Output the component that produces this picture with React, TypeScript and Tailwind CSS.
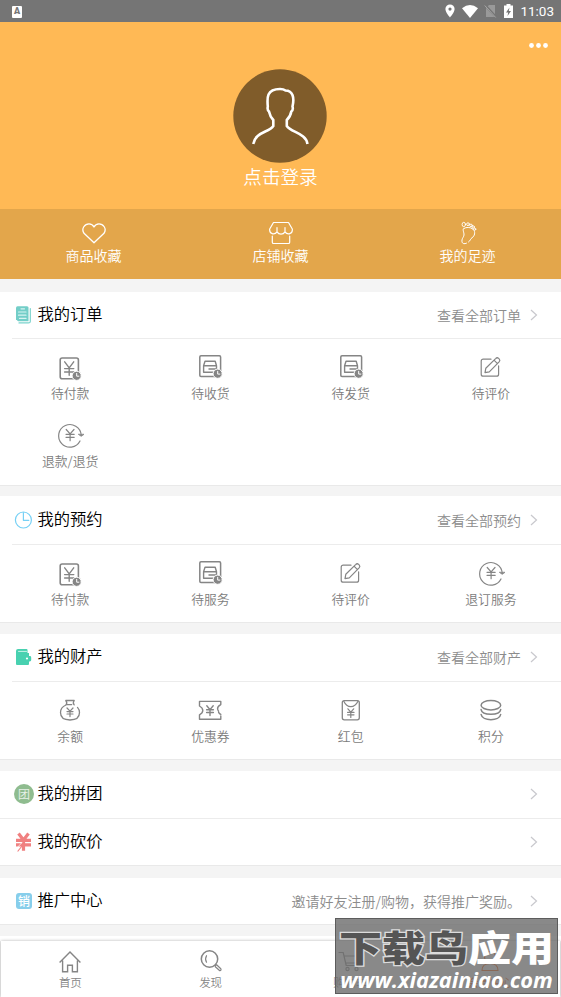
import type { ReactNode } from "react"

function Svg({ children, size = 28 }: { children: ReactNode; size?: number }) {
  return (
    <svg
      width={size}
      height={size}
      viewBox={`0 0 ${size} ${size}`}
      fill="none"
      stroke="currentColor"
      strokeWidth="1.2"
      strokeLinecap="round"
      strokeLinejoin="round"
      className="shrink-0"
    >
      {children}
    </svg>
  )
}

function ClockBadge({ x, y }: { x: number; y: number }) {
  return (
    <>
      <circle cx={x} cy={y} r="4.6" fill="currentColor" stroke="#fff" strokeWidth="1" />
      <path d={`M${x} ${y - 2.4}V${y + 0.4}H${x + 2.2}`} stroke="#fff" strokeWidth="1" />
    </>
  )
}

const PayIcon = () => (
  <Svg>
    <rect x="4.2" y="5" width="18.2" height="20.8" rx="2" strokeWidth="1.6" />
    <path d="M8.7 8.8l4.5 6 4.5-6M13.2 14.8v7.4M8.6 15.6h9.2M8.6 19h9.2" strokeWidth="1.4" />
    <ClockBadge x={20.7} y={22.8} />
  </Svg>
)

const BoxIcon = () => (
  <Svg>
    <rect x="3.8" y="2.8" width="20.8" height="20.6" rx="1.2" strokeWidth="1.5" />
    <path d="M9 8.3h10.2l1.3 4.4v6.6H7.6v-6.6zM7.6 12.7h12.9M13 16h7.5" strokeWidth="1.4" />
    <ClockBadge x={21.7} y={20.7} />
  </Svg>
)

const ReviewIcon = () => (
  <Svg>
    <path d="M14 6.2H6.2a2 2 0 0 0-2 2v13a2 2 0 0 0 2 2h13.400a2 2 0 0 0 2-2v-8.400" />
    <path d="M8 19.700l.8-4.400 9.800-9.700q1.500-1.600 3-.2l.7.700q1.200 1.300-.2 2.800l-9.800 9.900zM17 7.200l3.500 3.500" />
  </Svg>
)

const RefundIcon = () => (
  <Svg>
    <path d="M24 20a11.3 11.3 0 1 1 1.2-6" />
    <path d="M22.6 13.5l2.6 1.8 2.6-1.8z" fill="currentColor" strokeWidth=".8" />
    <path d="M10.2 8.5l3.9 4.4 3.9-4.4M14.1 12.9v6.8M10 13.3h8.2M10 16.3h8.2" />
  </Svg>
)

const BagIcon = () => (
  <Svg>
    <path d="M9.8 4.5h8.4q-1.8 2.6 0 4.4M9.8 4.5q2 2.8 0 4.4M10.5 8.6h5.2M10 9C6.4 10.4 4.5 13 4.5 16.6c0 5 3.8 7.4 9.5 7.4s9.500-2.600 9.500-7.400c0-2-.7-3.800-2-5.200" strokeWidth="1.300" />
    <path d="M11 12l3 3.2 3-3.2M14 15.2v5.4M11 15.6h6M11 18h6" />
  </Svg>
)

const CouponIcon = () => (
  <Svg>
    <path d="M3.5 10V5.4h21.3v3.2q-3.600 1.800-3.200 4.400.2 1.200 1 2.200M24.800 20v3.300H3.500v-4.500q3.300-2 3.300-4.400T3.500 10M24.800 18.400q-1.400-.6-2.200-2" strokeWidth="1.4" />
    <path d="M10.8 9.8l3.2 3.8 3.2-3.8M14 13.6v6M10.6 13.8h6.8M10.6 16.5h6.8" strokeWidth="1.4" />
  </Svg>
)

const EnvelopeIcon = () => (
  <Svg>
    <rect x="5.3" y="4.6" width="17" height="19.2" rx="2" strokeWidth="1.3" />
    <path d="M6.8 5.2q2.500 5.400 7 5.400T21 5.200" />
    <path d="M10.9 12.8l2.900 3.400 2.900-3.400M13.8 16.2v5.2M10.6 16.4H17M10.600 18.800H17" />
  </Svg>
)

const CoinsIcon = () => (
  <Svg>
    <ellipse cx="13.9" cy="9.2" rx="9.8" ry="4.7" strokeWidth="1.5" />
    <path d="M4.1 13.600c1 6.200 18.600 6.200 19.600 0M4.100 18.400c1 7 18.600 7 19.600 0" strokeWidth="1.5" />
  </Svg>
)

const OrdersIcon = () => (
  <Svg size={20}>
    <path d="M5 17.900h9.500q1.800 0 1.800-1.500V3.500" stroke="#7bd3cd" />
    <path d="M3.500 1.200H13q1.500 0 1.500 1.500v13.500H4l-2-2V2.700q0-1.500 1.500-1.500z" fill="#73cec8" stroke="none" />
    <path d="M7 3.800h3.500M4.500 7H12M4.500 10.200H12M5.500 13.400H12" stroke="#d8f3f1" />
  </Svg>
)

const ClockIcon = () => (
  <Svg size={20}>
    <g stroke="#76d0f5">
      <circle cx="9.4" cy="10" r="8" />
      <path d="M9.4 2.500v7.800h5.400" />
    </g>
  </Svg>
)

const WalletIcon = () => (
  <Svg size={20}>
    <path d="M4 2h8.500q1 0 1 1v3H15v3h.8q1.400 0 1.400 1.400v2.700q0 1.400-1.400 1.400H15V17q0 1-1 1H3q-1 0-1-1V4q0-2 2-2z" fill="#48d1b0" stroke="none" />
    <path d="M4.500 4.400h8" stroke="#d9f6ef" strokeWidth=".9" />
    <circle cx="13" cy="11.500" r="1.100" fill="#fff" stroke="none" />
  </Svg>
)

const GroupIcon = () => (
  <span className="flex h-5 w-5 items-center justify-center rounded-full bg-[#8fbc8f] text-white/80">
    <span className="text-[12px] leading-none">团</span>
  </span>
)

const BargainIcon = () => (
  <Svg size={20}>
    <path d="M4.500 1.500L9.500 8l5-6.500M9.500 8v10.800M2 8.300h15M2 12.800h15" stroke="#f08080" strokeWidth="3.200" strokeLinecap="butt" />
    <path d="M1.500 17.500L8 10.500" stroke="#fff" strokeWidth=".7" />
    <path d="M4 19l4-5" stroke="#f08080" />
  </Svg>
)

const SaleIcon = () => (
  <span className="ml-0.5 flex h-4 w-4 items-center justify-center rounded-[3px] bg-[#87ceeb] text-white">
    <span className="text-[12px] font-medium leading-none">销</span>
  </span>
)

function Chevron() {
  return (
    <svg width="8" height="12" viewBox="0 0 8 12" fill="none" stroke="#c8c8cd" strokeWidth="1.2">
      <path d="M1 1l5.500 5L1 11" />
    </svg>
  )
}

function HeaderRow({ icon, title, more }: { icon: ReactNode; title: string; more?: string }) {
  return (
    <div className="flex h-[46px] items-center pl-[14px] pr-[23px]">
      <span className="flex w-5">{icon}</span>
      <h2 className="ml-[3.5px] pb-1 text-[16.3px] leading-6 text-black">{title}</h2>
      <div className="ml-auto flex items-center gap-[9px]">
        {more && <span className="pb-px text-[14px] leading-5 text-[#8c8c8c]">{more}</span>}
        <Chevron />
      </div>
    </div>
  )
}

type Entry = { label: string; icon: ReactNode }

function EntryGrid({ entries }: { entries: Entry[] }) {
  return (
    <div className="grid grid-cols-4 pb-[9px] text-[#858585]">
      {entries.map((e) => (
        <div key={e.label} className="flex h-[68px] flex-col items-center pt-[14px]">
          {e.icon}
          <span className="mt-[3px] text-[12.8px] leading-[18px] text-[#7c7c7c]">{e.label}</span>
        </div>
      ))}
    </div>
  )
}

const orders: Entry[] = [
  { label: "待付款", icon: <PayIcon /> },
  { label: "待收货", icon: <BoxIcon /> },
  { label: "待发货", icon: <BoxIcon /> },
  { label: "待评价", icon: <ReviewIcon /> },
  { label: "退款/退货", icon: <RefundIcon /> },
]

const bookings: Entry[] = [
  { label: "待付款", icon: <PayIcon /> },
  { label: "待服务", icon: <BoxIcon /> },
  { label: "待评价", icon: <ReviewIcon /> },
  { label: "退订服务", icon: <RefundIcon /> },
]

const assets: Entry[] = [
  { label: "余额", icon: <BagIcon /> },
  { label: "优惠券", icon: <CouponIcon /> },
  { label: "红包", icon: <EnvelopeIcon /> },
  { label: "积分", icon: <CoinsIcon /> },
]

function StatusBar() {
  return (
    <div className="flex h-[22px] shrink-0 items-center bg-[#757575] pl-3 pr-[7px] text-white">
      <span className="mt-px flex h-[12px] w-[10px] items-center justify-center rounded-[1px] bg-white font-[Roboto] text-[9px] font-black leading-none text-[#757575]">
        A
      </span>
      <div className="ml-auto flex items-center">
        <svg width="10" height="14" viewBox="0 0 10 14" className="mr-[7px]">
          <path fillRule="evenodd" d="M5 .5A4.600 4.600 0 0 0 .4 5.100C.4 8.500 5 13.500 5 13.500s4.600-5 4.600-8.400A4.600 4.600 0 0 0 5 .5zm0 3a1.600 1.600 0 1 1 0 3.200 1.600 1.600 0 0 1 0-3.200z" fill="#fff" />
        </svg>
        <svg width="16" height="13" viewBox="0 0 16 13" className="mr-[6px]">
          <path d="M0 3.200Q8-3 16 3.200L8 13z" fill="#fff" />
        </svg>
        <svg width="13" height="14" viewBox="0 0 13 14" className="mr-[7px]">
          <path d="M5 1h6v12H2V4z" fill="#999" />
          <path d="M1 1l11 12" stroke="#757575" strokeWidth="2.400" />
          <path d="M.7 1.500l11 12" stroke="#a5a5a5" strokeWidth="1" />
        </svg>
        <svg width="9" height="14" viewBox="0 0 9 14" className="mr-[7px]">
          <path d="M0 1.500h2.500V0h4v1.500H9V14H0z" fill="#fff" />
          <path d="M5.500 3.500L2 8.500h2.200L3.500 12 7 7H4.800z" fill="#757575" />
        </svg>
        <span className="mt-px font-[Roboto] text-[13.5px] font-normal leading-none">11:03</span>
      </div>
    </div>
  )
}

function Profile() {
  return (
    <div className="flex h-[187px] shrink-0 flex-col items-center bg-[#ffb955] text-white">
      <div className="flex h-[47px] w-full justify-end pr-[13px] pt-[21px]">
        <svg width="19" height="5" viewBox="0 0 19 5" fill="#fff">
          <circle cx="2.500" cy="2.500" r="2.400" />
          <circle cx="9.500" cy="2.500" r="2.400" />
          <circle cx="16.500" cy="2.500" r="2.400" />
        </svg>
      </div>
      <svg width="94" height="94" viewBox="0 0 94 94" fill="none" className="mr-px shrink-0">
        <circle cx="47" cy="47" r="46.700" fill="#805c2a" />
        <path
          d="M20.300 75C22 63 36 63.500 40.300 57V51Q37 47.500 36 42.500Q34 41 34.800 37.500C34 29 33.500 20 47 20Q50.500 20 52.500 21.500C60 21.500 61.500 29 59.500 37.500Q60.500 41 58.300 42.500Q57.500 47.500 53.800 51V57C58 63.500 73 64 74.500 75"
          stroke="#fff"
          strokeWidth="2.600"
        />
      </svg>
      <span className="text-[18.6px] leading-[26px]">点击登录</span>
    </div>
  )
}

function Shortcuts() {
  return (
    <div className="grid h-[70px] shrink-0 grid-cols-3 bg-[#e3a64b] pt-3 text-white">
      <div className="flex flex-col items-center">
        <Svg size={24}>
          <path d="M12 21.800L2 12.300C-1.200 7.500 3 2.800 7 2.800q3.500 0 5 3.200 1.500-3.200 5-3.200c4 0 8.200 4.700 5 9.500z" strokeWidth="1.3" />
        </Svg>
        <span className="text-[14px] leading-5">商品收藏</span>
      </div>
      <div className="flex flex-col items-center">
        <Svg size={24}>
          <path d="M4.500 1.500h15L23.300 8q.5 4-3 4.800-2.800.3-4.300-2-1.500 2.300-4 2.300t-4-2.300q-1.500 2.300-4.300 2Q.2 12 .7 8zM8 6.500v4.300M16 6.500v4.300M3.300 15v6.200q0 1.300 1.300 1.300h14.800q1.300 0 1.300-1.300V15" />
        </Svg>
        <span className="text-[14px] leading-5">店铺收藏</span>
      </div>
      <div className="flex flex-col items-center">
        <Svg size={24}>
          <path d="M10.500 22.200C5.500 24.500 5 19.500 7 16.500 9.500 13 6.500 10.500 7.300 7.800q5-3 9.700.4c3 2.800 1.500 7-1 8.600-2 1.200-1 2.500-3.500 4.200" strokeWidth="1" />
          <g strokeWidth=".9">
            <ellipse cx="7.800" cy="3.500" rx="1.700" ry="2.200" />
            <circle cx="12" cy="3.200" r="1.400" />
            <circle cx="15" cy="4.400" r="1.300" />
            <circle cx="17.200" cy="6" r="1.200" />
            <circle cx="18.700" cy="8.200" r="1.100" />
          </g>
        </Svg>
        <span className="text-[14px] leading-5">我的足迹</span>
      </div>
    </div>
  )
}

function TabBar() {
  return (
    <nav className="mx-px grid h-14 shrink-0 grid-cols-4 bg-white text-[11.5px] leading-4 text-[#858585] shadow-[0_0_3px_rgba(0,0,0,0.3)]">
      <div className="flex flex-col items-center pr-px pt-2">
        <Svg size={24}>
          <path d="M1.600 13.500L12 3l10.400 10.500M4.600 11.500v11.300h5v-6.500h4.800v6.500h5V11.500" strokeWidth="1.400" strokeLinecap="butt" strokeLinejoin="miter" />
        </Svg>
        <span className="mt-px">首页</span>
      </div>
      <div className="flex flex-col items-center pt-2">
        <Svg size={24}>
          <circle cx="10.500" cy="10" r="8.200" strokeWidth="1.500" />
          <path d="M7.500 6.700q-1.800 3 0 6.500M16.300 16.500l1.300-.8 4.200 4q.8 1.600-1 2l-4.500-4z" />
        </Svg>
        <span className="mt-px">发现</span>
      </div>
      <div className="flex flex-col items-center pt-2">
        <Svg size={24}>
          <path d="M1 3.500h4.200l3 13h11.300M6 7h15l-2 7H7.800" />
          <circle cx="9.500" cy="20" r="1.600" />
          <circle cx="18.500" cy="20" r="1.600" />
        </Svg>
        <span className="mt-px">购物车</span>
      </div>
      <div className="flex flex-col items-center pt-2 text-[#ff5a00]">
        <Svg size={24}>
          <circle cx="12" cy="8" r="5.500" />
          <path d="M4 21.500q0-7 8-7t8 7z" />
        </Svg>
        <span className="mt-px">会员中心</span>
      </div>
    </nav>
  )
}

function Watermark() {
  return (
    <div className="absolute left-[335px] top-[918px] flex h-[76px] w-[223px] flex-col items-center overflow-hidden border border-[#5c5c5c] bg-[#6c6c6c]/80 text-white">
      <div className="mt-[8px] flex h-[38px] scale-y-[0.84] items-center whitespace-nowrap text-[43px] font-black leading-[38px]">
        <span className="text-[#555] [-webkit-text-stroke:3px_#dcdcdc] [paint-order:stroke_fill]">下载鸟</span>
        <span>应用</span>
      </div>
      <span className="mt-[3px] whitespace-nowrap font-['Open_Sans'] text-[21.8px] font-bold italic leading-6">
        www.xiazainiao.com
      </span>
    </div>
  )
}

export default function App() {
  return (
    <div className="relative flex h-[997px] w-[561px] flex-col overflow-hidden bg-[#f4f4f4] font-['Noto_Sans_CJK_SC',sans-serif] font-[350]">
      <StatusBar />
      <Profile />
      <Shortcuts />
      <main className="flex min-h-0 flex-1 flex-col overflow-hidden pt-[13px] *:shrink-0">
        <section className="border-b border-[#e9e9e9] bg-white pb-px">
          <HeaderRow icon={<OrdersIcon />} title="我的订单" more="查看全部订单" />
          <div className="ml-3 h-px bg-[#ececec]" />
          <EntryGrid entries={orders} />
        </section>

        <section className="mt-[10px] border-b border-[#e9e9e9] bg-white pt-px">
          <HeaderRow icon={<ClockIcon />} title="我的预约" more="查看全部预约" />
          <div className="ml-3 mt-px h-px bg-[#ececec]" />
          <EntryGrid entries={bookings} />
        </section>

        <section className="mt-[11px] border-b border-[#e9e9e9] bg-white">
          <HeaderRow icon={<WalletIcon />} title="我的财产" more="查看全部财产" />
          <div className="ml-3 mt-px h-px bg-[#ececec]" />
          <EntryGrid entries={assets} />
        </section>

        <section className="mt-[11px] border-b border-[#e9e9e9] bg-white">
          <HeaderRow icon={<GroupIcon />} title="我的拼团" />
          <div className="mt-px h-px bg-[#ececec]" />
          <HeaderRow icon={<BargainIcon />} title="我的砍价" />
        </section>

        <section className="mt-3 border-b border-[#e9e9e9] bg-white">
          <HeaderRow icon={<SaleIcon />} title="推广中心" more="邀请好友注册/购物，获得推广奖励。" />
        </section>

        <div className="mt-[11px] h-2 bg-white" />
      </main>
      <TabBar />
      <Watermark />
    </div>
  )
}
